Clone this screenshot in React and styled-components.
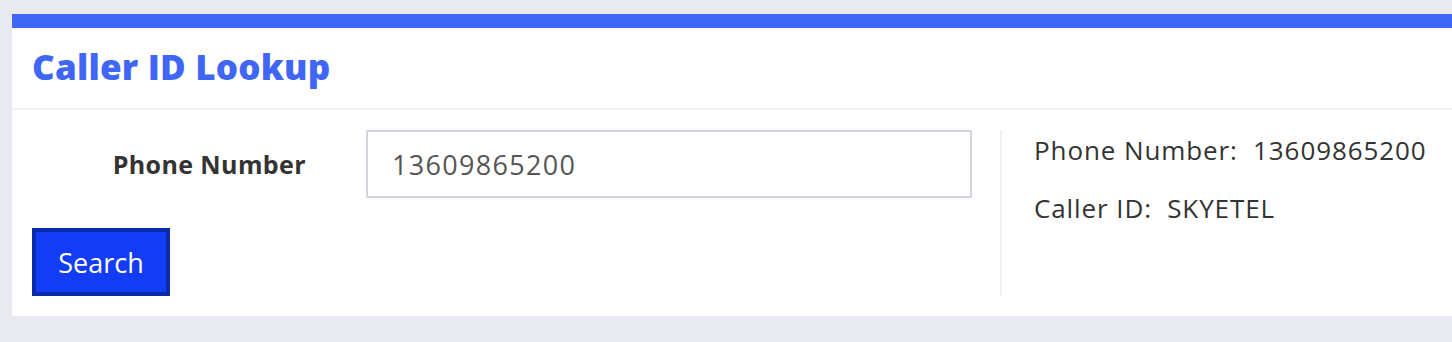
import React from "react";
import styled, { createGlobalStyle } from "styled-components";

const Global = createGlobalStyle`
  html, body { margin: 0; padding: 0; background: #e9eaf0; }
  body { font-family: "Open Sans", "Liberation Sans", sans-serif; }
  * { box-sizing: border-box; }
`;

const Page = styled.div`
  padding: 14px 0 0 12px;
  height: 342px;
`;

const Card = styled.section`
  background: #ffffff;
  border-top: 14px solid #3f66f5;
`;

const Header = styled.header`
  height: 82px;
  display: flex;
  align-items: center;
  padding: 0 0 4px 20px;
  border-bottom: 2px solid #f1f2f5;
`;

const Title = styled.h1`
  margin: 0;
  font-family: "Open Sans", sans-serif;
  font-weight: 800;
  font-size: 35px;
  color: #4066f5;
  letter-spacing: 0.2px;
`;

const Body = styled.div`
  display: flex;
  padding: 20px 0 20px 20px;
`;

const FormCol = styled.div`
  width: 970px;
  display: flex;
  flex-direction: column;
  gap: 30px;
  border-right: 2px solid #f0f1f3;
`;

const FieldRow = styled.div`
  display: flex;
  align-items: center;
`;

const Label = styled.label`
  width: 274px;
  text-align: right;
  font-size: 25px;
  font-weight: 700;
  color: #333;
  margin-right: 60px;
  letter-spacing: 0.4px;
`;

const Input = styled.input`
  width: 606px;
  height: 68px;
  border: 2px solid #d3d6dd;
  padding: 0 24px;
  font-family: inherit;
  font-size: 27px;
  letter-spacing: 1.3px;
  color: #555;
  outline: none;
`;

const Button = styled.button`
  align-self: flex-start;
  width: 138px;
  height: 68px;
  background: #123df5;
  border: 4px solid #0a2aa9;
  color: #fff;
  font-family: inherit;
  font-size: 27px;
  cursor: pointer;
  padding: 0;
`;

const ResultCol = styled.div`
  padding: 0 0 0 32px;
  display: flex;
  flex-direction: column;
  gap: 18px;
`;

const ResultLine = styled.div`
  font-size: 26px;
  letter-spacing: 0.9px;
  color: #333;
  line-height: 40px;
  white-space: pre;
`;

export default function App() {
  return (
    <>
      <Global />
      <Page>
        <Card>
          <Header>
            <Title>Caller ID Lookup</Title>
          </Header>
          <Body>
            <FormCol>
              <FieldRow>
                <Label>Phone Number</Label>
                <Input defaultValue="13609865200" />
              </FieldRow>
              <Button>Search</Button>
            </FormCol>
            <ResultCol>
              <ResultLine>{"Phone Number:  13609865200"}</ResultLine>
              <ResultLine>{"Caller ID:  SKYETEL"}</ResultLine>
            </ResultCol>
          </Body>
        </Card>
      </Page>
    </>
  );
}
